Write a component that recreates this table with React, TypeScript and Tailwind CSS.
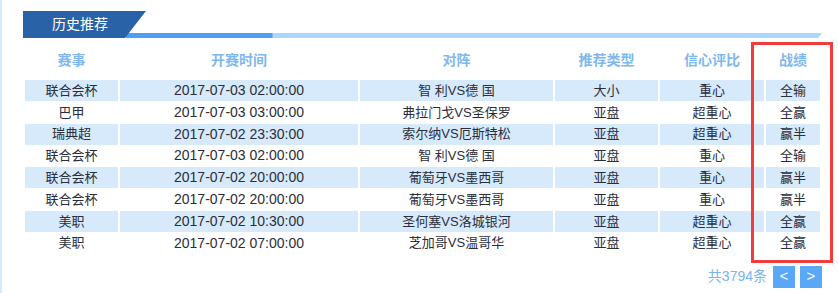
const rows = [
  ['联合会杯', '2017-07-03 02:00:00', '智 利VS德 国', '大小', '重心', '全输'],
  ['巴甲', '2017-07-03 03:00:00', '弗拉门戈VS圣保罗', '亚盘', '超重心', '全赢'],
  ['瑞典超', '2017-07-02 23:30:00', '索尔纳VS厄斯特松', '亚盘', '超重心', '赢半'],
  ['联合会杯', '2017-07-03 02:00:00', '智 利VS德 国', '亚盘', '重心', '全输'],
  ['联合会杯', '2017-07-02 20:00:00', '葡萄牙VS墨西哥', '亚盘', '重心', '赢半'],
  ['联合会杯', '2017-07-02 20:00:00', '葡萄牙VS墨西哥', '亚盘', '重心', '赢半'],
  ['美职', '2017-07-02 10:30:00', '圣何塞VS洛城银河', '亚盘', '超重心', '全赢'],
  ['美职', '2017-07-02 07:00:00', '芝加哥VS温哥华', '亚盘', '超重心', '全赢']
];

const headers = ['赛事', '开赛时间', '对阵', '推荐类型', '信心评比', '战绩'];

const cols = 'grid grid-cols-[93px_238px_193px_103px_104px_54px] gap-x-[2px]';

export default function App() {
  return (
    <div className="relative h-[293px] w-[838px] overflow-hidden border-l-2 border-[#d5eafc] bg-white font-['Liberation_Sans','Noto_Sans_CJK_SC',sans-serif] text-[13px] text-[#2b2d3a]">
      <div className="w-[820px] pl-[21px] pt-[11px]">
        {/* title tab */}
        <div className="flex h-[27px]">
          <div className="relative z-10 flex w-[123px] shrink-0 items-center bg-[#2a62a8] pl-[29px] text-[14px] text-white [clip-path:polygon(0_0,100%_0,calc(100%-21px)_100%,0_100%)]">
            历史推荐
          </div>
          <div className="-ml-[20px] h-[5px] w-[696px] self-end bg-[linear-gradient(90deg,#4d9ef6_0,#4d9ef6_146px,#aad6ff_147px)] [clip-path:polygon(0_0,100%_0,calc(100%-4px)_100%,0_100%)]" />
        </div>

        {/* table */}
        <div className="ml-[2px] mt-[12px]">
          <div className={`${cols} h-[20px] items-center text-center text-[14px] font-bold text-[#80b7ef]`}>
            {headers.map((h) => (
              <div key={h}>{h}</div>
            ))}
          </div>
          <div className="mt-[10px] flex flex-col gap-y-[1.8px]">
            {rows.map((r, i) => (
              <div key={i} className={`${cols} h-[20px]`}>
                {r.map((c, j) => (
                  <div
                    key={j}
                    className={`flex items-center justify-center whitespace-pre ${i % 2 === 0 ? 'bg-[#d6eafc]' : ''} ${j === 1 ? 'text-[14px]' : ''}`}
                  >
                    {c}
                  </div>
                ))}
              </div>
            ))}
          </div>
        </div>

        {/* pager */}
        <div className="mt-[13px] flex items-center justify-end gap-[5px]">
          <span className="mr-[1px] text-[14px] text-[#7ab3f0]">共3794条</span>
          <button className="flex h-[22px] w-[22px] items-center justify-center bg-[#5aa6f7] text-[15px] text-white">&lt;</button>
          <button className="flex h-[22px] w-[22px] items-center justify-center bg-[#5aa6f7] text-[15px] text-white">&gt;</button>
        </div>
      </div>

      {/* highlight box */}
      <div className="absolute left-[749px] top-[42px] h-[221px] w-[82px] border-[3px] border-[#f03c3c]" />
    </div>
  );
}
